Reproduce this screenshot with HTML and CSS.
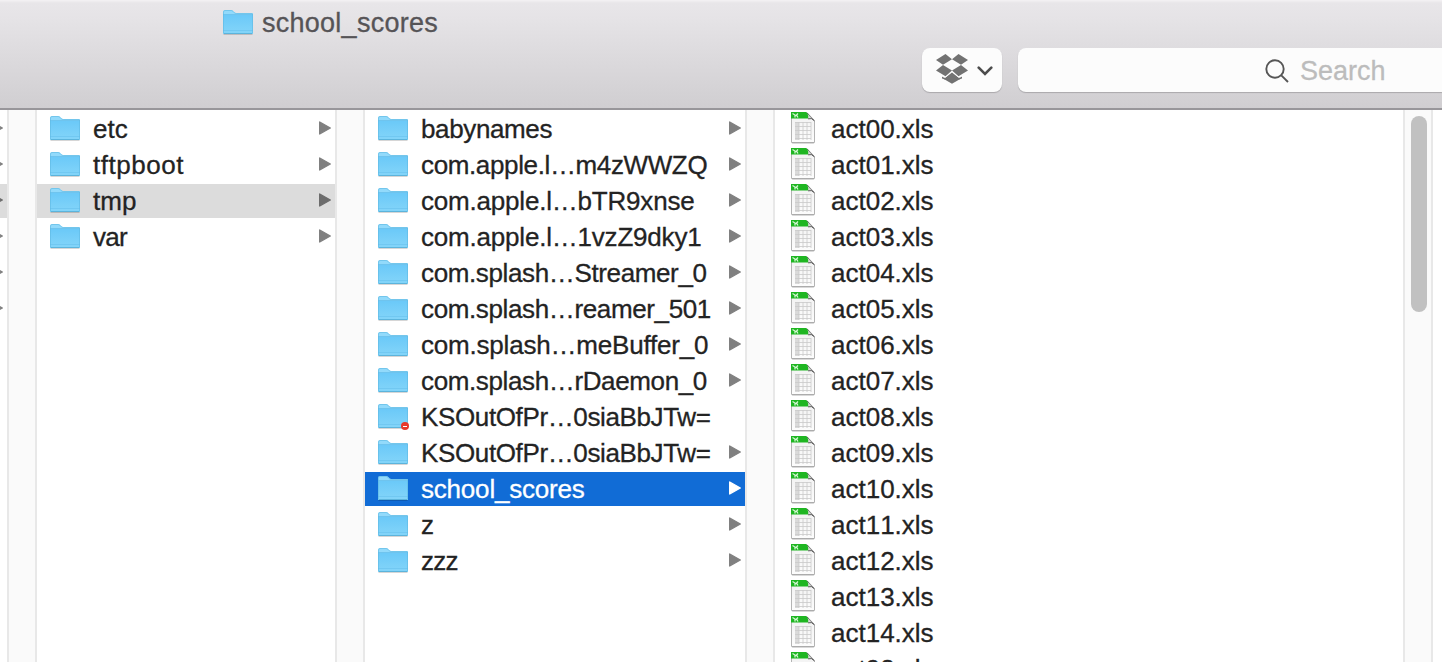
FILE: index.html
```
<!DOCTYPE html>
<html lang="en">
<head>
<meta charset="utf-8">
<title>school_scores</title>
<link rel="stylesheet" href="styles.css">
</head>
<body>
<svg class="defs" aria-hidden="true">
  <defs>
    <linearGradient id="folder-fill" x1="0" y1="0" x2="0" y2="1"><stop offset="0" stop-color="#6bc9f8"/><stop offset="1" stop-color="#84d5f9"/></linearGradient>
    <linearGradient id="page-fill" x1="0" y1="0" x2="0" y2="1"><stop offset="0" stop-color="#f1f1f1"/><stop offset="1" stop-color="#fdfdfd"/></linearGradient>
  </defs>
  <symbol id="folder" viewBox="0 0 32 28">
    <path d="M1.500 25h29v1h-29z" fill="#000" opacity=".16"/>
    <path d="M1 24V3q0-2 2-2h6q1.400 0 2.300 1l1.200 1.300q.7.7 1.700.7H30q1 0 1 1v19q0 1-1 1H2q-1 0-1-1z" fill="#92dafb"/>
    <path d="M1 6h30v18q0 1-1 1H2q-1 0-1-1z" fill="url(#folder-fill)"/>
    <path d="M1 5.500h30" stroke="#58b6e6" opacity=".6"/>
    <path d="M1 21.500h30" stroke="#58b6e6" opacity=".35"/>
    <path d="M1.500 24V3q0-1.500 1.500-1.500h6q1.200 0 2 .9l1.200 1.300q.8.800 2 .8H30q.5 0 .5.500v19q0 .5-.5.500H2q-.5 0-.5-.5z" fill="none" stroke="#5fb9e2" opacity=".6"/>
    <path d="M2 24.500h28" stroke="#55aed6" opacity=".7"/>
  </symbol>
  <symbol id="sheet" viewBox="0 0 24 32">
    <path d="M.5 1h15.800L23.500 8.500v21.500q0 1-1 1h-21q-1 0-1-1z" fill="url(#page-fill)" stroke="#b4b4b4"/>
    <path d="M1 30.500h22" stroke="#999" opacity=".7"/>
    <path d="M0 0h15q4 2.500 4 6.500H0z" fill="#1fb622"/>
    <path d="M1.500 1.500l2.500 1.500v2.500M7 1.500L5.500 3 7 5.500M4 3.300h1.500" stroke="#d5f8d4" stroke-width="1.300" fill="none"/>
    <path d="M15.500.5q2.500 2.500 1.500 6.500 4-1.300 6.500 2z" fill="#dedede"/>
    <path d="M16 1l7 7.500" stroke="#555" stroke-width=".8" opacity=".75"/>
    <path d="M17 6.800q4-1.300 6.300 2" stroke="#333" stroke-width="1" opacity=".75" fill="none"/>
    <path d="M4 10h4v18H4z" fill="#dadada"/>
    <path d="M8 10v18M12 10v18M16 10v18M20 10v18M4 10.500h16M4 14.500h16M4 18.500h16M4 22.500h16M4 26.500h16" stroke="#c9c9c9" fill="none" stroke-width=".8"/>
  </symbol>
  <symbol id="arrow" viewBox="0 0 12 14"><path d="M.7 1l10.600 6L.7 13z" fill="currentColor" stroke="currentColor" stroke-width="1.400" stroke-linejoin="round"/></symbol>
</svg>
<header class="toolbar">
  <h1 class="title"><svg class="folder"><use href="#folder"/></svg><span>school_scores</span></h1>
  <div class="controls">
    <button class="dropbox" aria-label="Dropbox">
      <svg class="box" viewBox="0 0 32 30" fill="#727272"><path d="M9.500 0L16 5.200 7 10.800 0 6.100zM22.500 0L32 6.100l-7 4.700-9-5.600zM7 10.900l9 5.600-6.500 5.800L0 16.400zM25 10.900l7 5.500-9.500 5.900-6.500-5.800zM16 18.800l8.600 5.900L16 29.800l-8.600-5.100z"/><path d="M6 22.500l3.500 1.500 6.500-5.700 6.500 5.700 3.500-1.500v2l-3 1-7-5.900-7 5.900-3-1z"/><path d="M6.500 22.500l3 .8 6.500-5.600 6.500 5.600 3-.8" fill="none" stroke="#fcfcfc" stroke-width=".9"/></svg>
      <svg class="chevron" viewBox="0 0 16 10"><path d="M1.700 1.700L8 8l6.300-6.300" fill="none" stroke="#4c4c4c" stroke-width="2.600" stroke-linecap="round"/></svg>
    </button>
    <div class="search">
      <svg class="lens" viewBox="0 0 24 24" fill="none" stroke="#565656" stroke-width="1.900"><circle cx="10" cy="10" r="8.700"/><path d="M16.300 16.300L23 23"/></svg>
      <span>Search</span>
    </div>
  </div>
</header>
<main class="browser">
  <ul class="column edge">
    <li class="row"><svg class="arrow"><use href="#arrow"/></svg></li>
    <li class="row"><svg class="arrow"><use href="#arrow"/></svg></li>
    <li class="row path"><svg class="arrow"><use href="#arrow"/></svg></li>
    <li class="row"><svg class="arrow"><use href="#arrow"/></svg></li>
    <li class="row"><svg class="arrow"><use href="#arrow"/></svg></li>
    <li class="row"><svg class="arrow"><use href="#arrow"/></svg></li>
  </ul>
  <div class="gutter"></div>
  <ul class="column root">
    <li class="row"><svg class="folder"><use href="#folder"/></svg><span>etc</span><svg class="arrow"><use href="#arrow"/></svg></li>
    <li class="row"><svg class="folder"><use href="#folder"/></svg><span class="wide">tftpboot</span><svg class="arrow"><use href="#arrow"/></svg></li>
    <li class="row path"><svg class="folder"><use href="#folder"/></svg><span>tmp</span><svg class="arrow"><use href="#arrow"/></svg></li>
    <li class="row"><svg class="folder"><use href="#folder"/></svg><span class="snug">var</span><svg class="arrow"><use href="#arrow"/></svg></li>
  </ul>
  <div class="gutter"></div>
  <ul class="column tmp">
    <li class="row"><svg class="folder"><use href="#folder"/></svg><span>babynames</span><svg class="arrow"><use href="#arrow"/></svg></li>
    <li class="row"><svg class="folder"><use href="#folder"/></svg><span>com.apple.l…m4zWWZQ</span><svg class="arrow"><use href="#arrow"/></svg></li>
    <li class="row"><svg class="folder"><use href="#folder"/></svg><span class="loose">com.apple.l…bTR9xnse</span><svg class="arrow"><use href="#arrow"/></svg></li>
    <li class="row"><svg class="folder"><use href="#folder"/></svg><span class="loose">com.apple.l…1vzZ9dky1</span><svg class="arrow"><use href="#arrow"/></svg></li>
    <li class="row"><svg class="folder"><use href="#folder"/></svg><span>com.splash…Streamer_0</span><svg class="arrow"><use href="#arrow"/></svg></li>
    <li class="row"><svg class="folder"><use href="#folder"/></svg><span>com.splash…reamer_501</span><svg class="arrow"><use href="#arrow"/></svg></li>
    <li class="row"><svg class="folder"><use href="#folder"/></svg><span class="loose">com.splash…meBuffer_0</span><svg class="arrow"><use href="#arrow"/></svg></li>
    <li class="row"><svg class="folder"><use href="#folder"/></svg><span>com.splash…rDaemon_0</span><svg class="arrow"><use href="#arrow"/></svg></li>
    <li class="row locked"><svg class="folder"><use href="#folder"/></svg><i class="badge"></i><span>KSOutOfPr…0siaBbJTw=</span></li>
    <li class="row"><svg class="folder"><use href="#folder"/></svg><span>KSOutOfPr…0siaBbJTw=</span><svg class="arrow"><use href="#arrow"/></svg></li>
    <li class="row selected"><svg class="folder"><use href="#folder"/></svg><span class="loose">school_scores</span><svg class="arrow"><use href="#arrow"/></svg></li>
    <li class="row"><svg class="folder"><use href="#folder"/></svg><span class="snug">z</span><svg class="arrow"><use href="#arrow"/></svg></li>
    <li class="row"><svg class="folder"><use href="#folder"/></svg><span class="snug">zzz</span><svg class="arrow"><use href="#arrow"/></svg></li>
  </ul>
  <div class="gutter"></div>
  <ul class="column files">
    <li class="row"><svg class="sheet"><use href="#sheet"/></svg><span>act00.xls</span></li>
    <li class="row"><svg class="sheet"><use href="#sheet"/></svg><span>act01.xls</span></li>
    <li class="row"><svg class="sheet"><use href="#sheet"/></svg><span>act02.xls</span></li>
    <li class="row"><svg class="sheet"><use href="#sheet"/></svg><span>act03.xls</span></li>
    <li class="row"><svg class="sheet"><use href="#sheet"/></svg><span>act04.xls</span></li>
    <li class="row"><svg class="sheet"><use href="#sheet"/></svg><span>act05.xls</span></li>
    <li class="row"><svg class="sheet"><use href="#sheet"/></svg><span>act06.xls</span></li>
    <li class="row"><svg class="sheet"><use href="#sheet"/></svg><span>act07.xls</span></li>
    <li class="row"><svg class="sheet"><use href="#sheet"/></svg><span>act08.xls</span></li>
    <li class="row"><svg class="sheet"><use href="#sheet"/></svg><span>act09.xls</span></li>
    <li class="row"><svg class="sheet"><use href="#sheet"/></svg><span>act10.xls</span></li>
    <li class="row"><svg class="sheet"><use href="#sheet"/></svg><span>act11.xls</span></li>
    <li class="row"><svg class="sheet"><use href="#sheet"/></svg><span>act12.xls</span></li>
    <li class="row"><svg class="sheet"><use href="#sheet"/></svg><span>act13.xls</span></li>
    <li class="row"><svg class="sheet"><use href="#sheet"/></svg><span>act14.xls</span></li>
    <li class="row"><svg class="sheet"><use href="#sheet"/></svg><span>act98.xls</span></li>
  </ul>
  <div class="gutter"><div class="thumb"></div></div>
</main>
</body>
</html>
```
FILE: styles.css
```
* { box-sizing: border-box; }
body {
  margin: 0;
  height: 662px;
  overflow: hidden;
  display: flex;
  flex-direction: column;
  background: #fff;
  color: #232323;
  font: 26px/34px "Liberation Sans", Arial, sans-serif;
  -webkit-text-stroke: .3px;
}
svg { display: block; flex: none; }
.defs { position: absolute; width: 0; height: 0; }

.toolbar {
  flex: none;
  height: 110px;
  padding-top: 6px;
  border-bottom: 2px solid #98969a;
  background: linear-gradient(#f4f2f4 0, #e8e6e9 3px, #e5e3e6 20px, #d0ced1 100%);
}
.title {
  display: flex;
  align-items: center;
  gap: 8px;
  height: 34px;
  margin: 0 0 8px 222px;
  font-size: 27px;
  font-weight: 400;
  letter-spacing: .26px;
  color: #565457;
}
.controls { display: flex; gap: 16px; margin-left: 922px; }
.dropbox, .search {
  height: 44px;
  border: 0;
  border-radius: 8px;
  background: #fcfcfc;
  box-shadow: 0 1px 1px #aaa8ab;
}
.dropbox {
  display: flex;
  align-items: center;
  gap: 9px;
  width: 80px;
  padding: 0 0 2px 14px;
}
.box { width: 32px; height: 30px; }
.chevron { width: 16px; height: 10px; margin-top: 3px; }
.search {
  display: flex;
  align-items: center;
  gap: 11px;
  flex: 1;
  padding: 2px 0 0 247px;
  border-radius: 8px 0 0 8px;
  color: #bcbcbc;
  font-size: 27px;
}
.lens { width: 24px; height: 24px; }

.browser { display: flex; flex: 1; min-height: 0; }
.column {
  margin: 0;
  padding: 2px 0 0;
  list-style: none;
  flex: none;
  overflow: hidden;
}
.edge { width: 7px; }
.root { width: 298px; }
.tmp { width: 380px; letter-spacing: -.37px; }
.files { width: 628px; font-kerning: none; }
.gutter {
  flex: none;
  width: 30px;
  padding: 6px 0 0 6px;
  border: solid #e8e8e8;
  border-width: 0 2px;
  background: #fafafa;
}
.thumb { width: 16px; height: 196px; border-radius: 8px; background: #c1c1c1; }

.row {
  display: flex;
  align-items: center;
  position: relative;
  height: 34px;
  margin-bottom: 2px;
  padding-left: 12px;
  white-space: nowrap;
}
.row span { margin-left: 12px; }
.wide { letter-spacing: .55px; }
.loose { letter-spacing: -.2px; }
.snug { letter-spacing: -.7px; }
.folder { width: 32px; height: 28px; }
.row .folder { margin-top: -1px; }
.arrow { width: 12px; height: 14px; margin: -2px 4px 0 auto; color: #808080; }
.edge .row { padding: 0; }
.edge .arrow { margin: -2px 0 0 -9px; }
.path { background: #dcdcdc; }
.path .arrow { color: #6c6c6c; }
.selected { background: #116cd6; color: #fff; }
.selected .arrow { color: #fff; }
.badge {
  position: absolute;
  left: 36px;
  top: 22px;
  width: 8px;
  height: 8px;
  border-radius: 50%;
  background: linear-gradient(#fff, #fff) center / 4px 1px no-repeat #e8392b;
}
.files .row { padding-left: 16px; }
.sheet { width: 24px; height: 32px; margin-top: -2px; }
.files .row span { margin-left: 16px; }
```
